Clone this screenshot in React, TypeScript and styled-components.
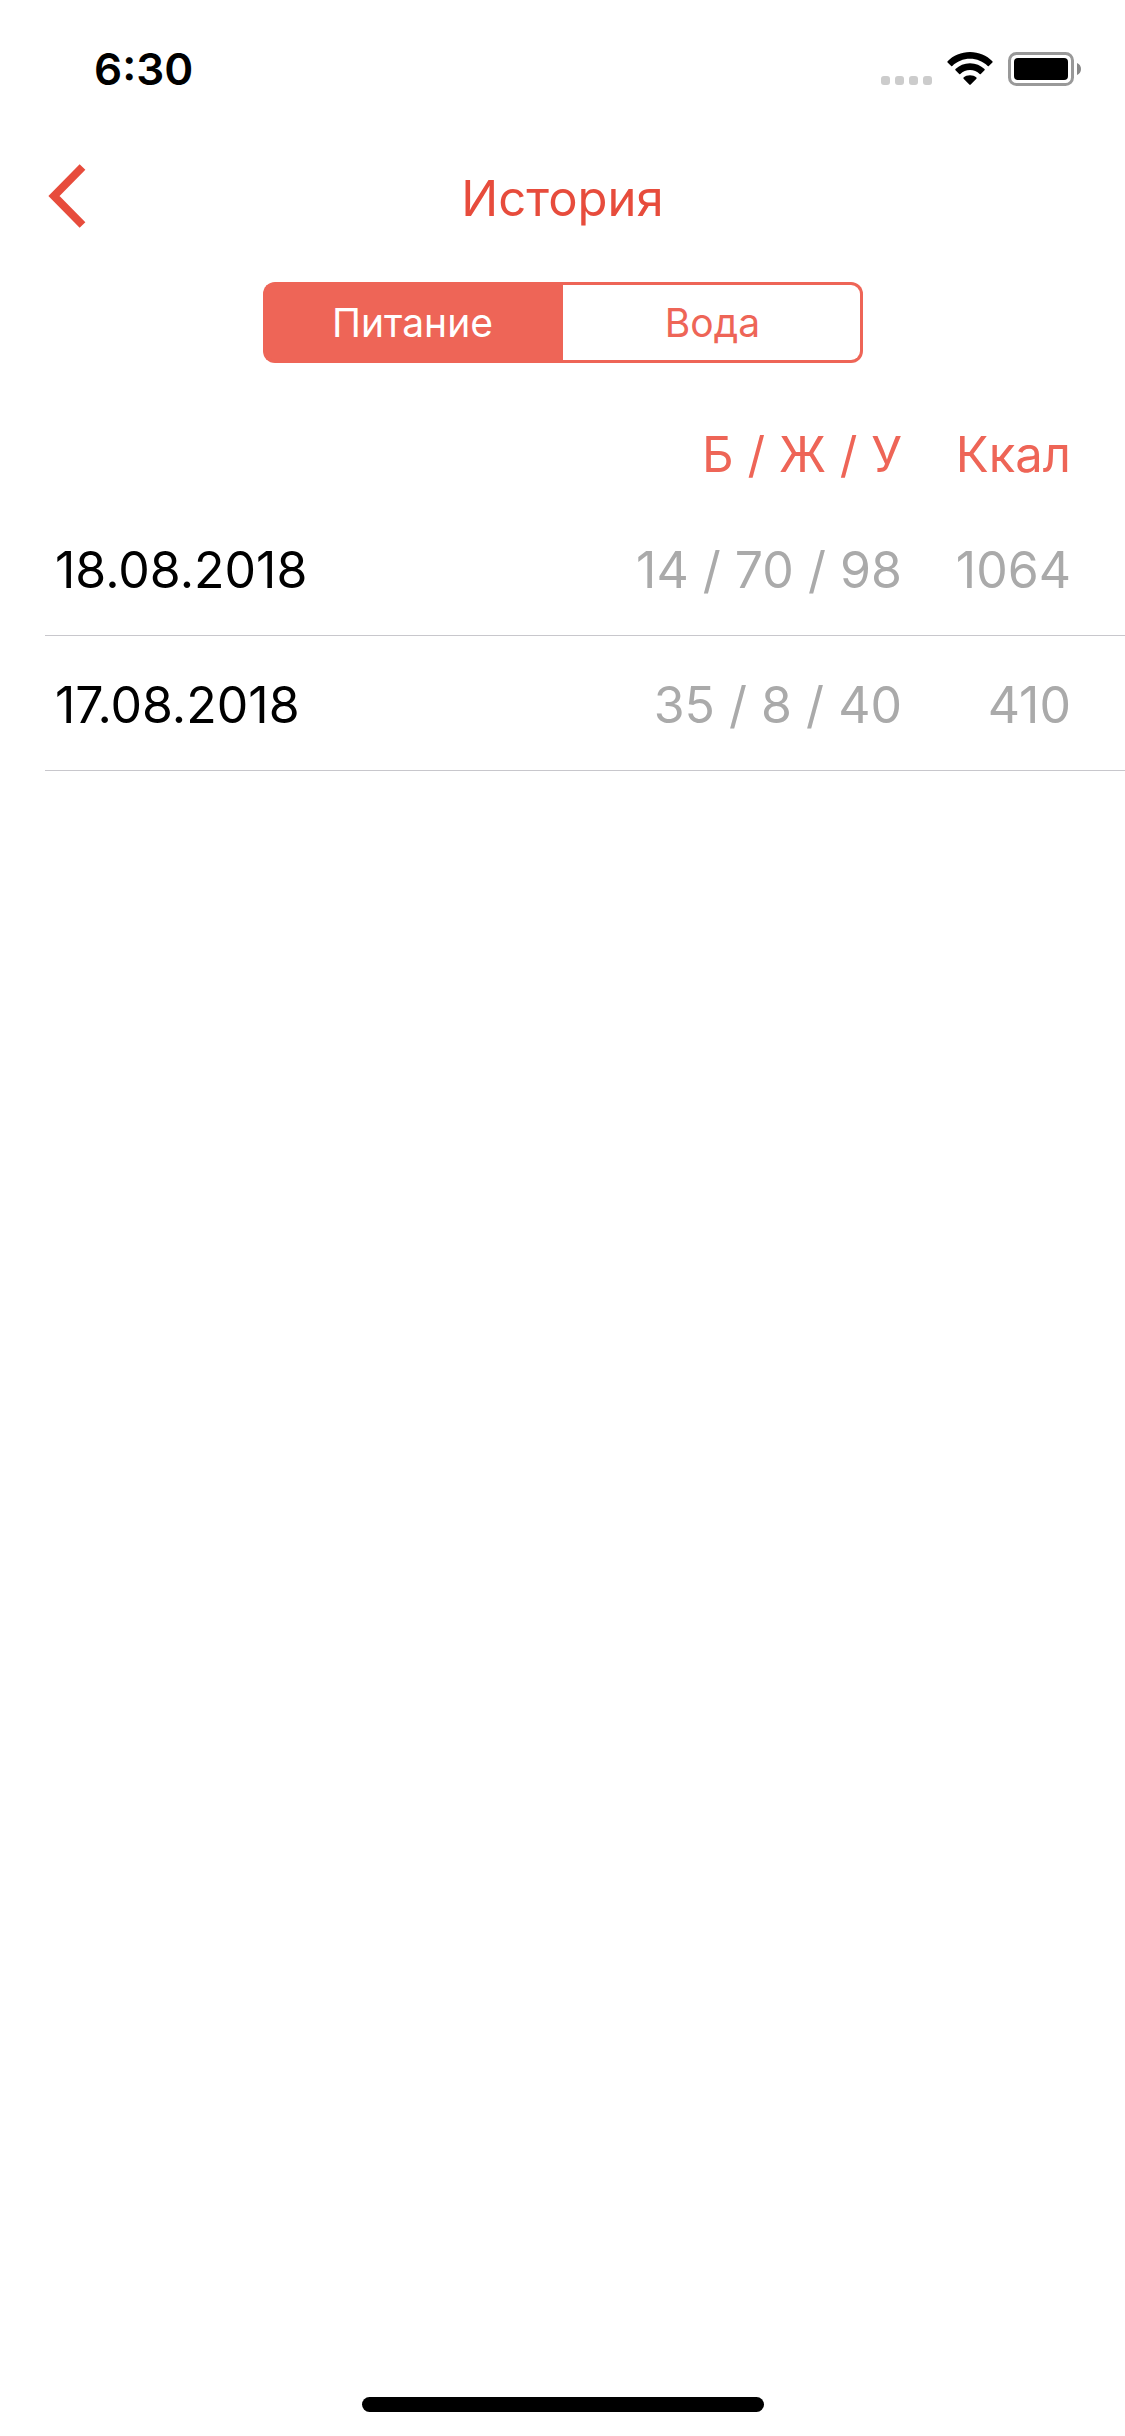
import { useState } from "react";
import styled, { createGlobalStyle } from "styled-components";

const GlobalStyle = createGlobalStyle`
  *, *::before, *::after { box-sizing: border-box; }
  body {
    margin: 0;
    background: #fff;
    color: #000;
    font-family: Inter, "Liberation Sans", sans-serif;
  }
`;

const Screen = styled.div`
  display: flex;
  flex-direction: column;
  min-height: 100vh;
`;

const StatusBar = styled.header`
  display: flex;
  align-items: center;
  justify-content: space-between;
  height: 138px;
  padding: 0 44px 0 94px;
`;

const Clock = styled.time`
  font-size: 44px;
  line-height: 60px;
  font-weight: 600;
`;

const StatusIcons = styled.div`
  display: flex;
  align-items: flex-end;
  gap: 15px;
`;

const NavBar = styled.nav`
  display: grid;
  grid-template-columns: 120px 1fr 120px;
  align-items: center;
  height: 120px;
  padding-top: 2px;
`;

const BackButton = styled.button`
  display: flex;
  padding: 0 0 6px 48px;
  border: 0;
  background: none;
  cursor: pointer;
`;

const Title = styled.h1`
  margin: 0;
  color: #e74c3c;
  font-size: 49px;
  line-height: 60px;
  font-weight: 400;
  text-align: center;
`;

const Segments = styled.div`
  display: grid;
  grid-template-columns: 1fr 1fr;
  width: min(600px, 100% - 90px);
  margin: 24px auto 45px;
`;

const Segment = styled.button<{ $active: boolean }>`
  height: 81px;
  padding: 0;
  border: 3px solid #ee6557;
  background: ${({ $active }) => ($active ? "#ee6557" : "#fff")};
  color: ${({ $active }) => ($active ? "#fff" : "#ee6557")};
  font-family: inherit;
  font-size: 39px;
  line-height: 48px;
  cursor: pointer;

  &:first-child {
    padding-right: 3px;
    border-right: 0;
    border-radius: 12px 0 0 12px;
  }

  &:last-child {
    padding-left: 3px;
    border-left: 0;
    border-radius: 0 12px 12px 0;
  }
`;

const History = styled.main`
  flex: 1;
  padding-left: 45px;
`;

const Table = styled.table`
  width: 100%;
  border-spacing: 0;
  font-size: 50px;
  line-height: 60px;
  white-space: nowrap;
`;

const HeadCell = styled.th`
  height: 93px;
  padding: 0;
  color: #ee6557;
  font-size: 49px;
  font-weight: 400;
  text-align: right;

  &:last-child {
    width: 223px;
    padding-right: 54px;
  }
`;

const Cell = styled.td`
  height: 135px;
  padding: 3px 0 0;
  border-bottom: 1px solid #c8c7cc;
  color: #aaa;
  text-align: right;

  &:last-child {
    padding-right: 54px;
  }
`;

const DateCell = styled.th`
  padding: 3px 0 0 10px;
  border-bottom: 1px solid #c8c7cc;
  font-weight: 400;
  text-align: left;
`;

const HomeBar = styled.footer`
  display: flex;
  justify-content: center;
  padding-bottom: 24px;
`;

const HomeIndicator = styled.div`
  width: 402px;
  height: 15px;
  border-radius: 8px;
  background: #000;
`;

const SignalIcon = () => (
  <svg width="51" height="34" viewBox="0 0 51 34" aria-hidden="true">
    {[0, 14, 28, 42].map((x) => (
      <rect key={x} x={x} y="24" width="9" height="9" rx="3" fill="#ccc" />
    ))}
  </svg>
);

const WifiIcon = () => (
  <svg width="46" height="34" viewBox="0 0 46 34" aria-hidden="true">
    <path d="M23 0C14.2 0 6.300 3.500 .6 9.200Q0 9.900 .6 10.500L4.200 14.100Q4.700 14.600 5.300 14C10 9.500 16.200 6.800 23 6.800S36 9.500 40.700 14Q41.300 14.600 41.800 14.100L45.400 10.500Q46 9.900 45.400 9.200C39.700 3.500 31.800 0 23 0Z" />
    <path d="M23 11.200C17.300 11.200 12.200 13.400 8.500 17Q7.900 17.600 8.500 18.200L12.200 21.900Q12.700 22.400 13.300 21.900C15.900 19.500 19.300 18 23 18S30.100 19.500 32.700 21.900Q33.300 22.400 33.800 21.900L37.500 18.200Q38.100 17.600 37.500 17C33.800 13.400 28.700 11.200 23 11.200Z" />
    <path d="M23 23.200C20.500 23.200 18.300 24 16.600 25.600Q16 26.200 16.600 26.800L22.300 32.600Q23 33.200 23.700 32.600L29.400 26.800Q30 26.200 29.400 25.600C27.700 24 25.500 23.200 23 23.200Z" />
  </svg>
);

const BatteryIcon = () => (
  <svg width="73" height="34" viewBox="0 0 73 34" aria-hidden="true">
    <rect x="1.500" y="1.500" width="63" height="31" rx="7" fill="none" stroke="#999" strokeWidth="3" />
    <rect x="6" y="6" width="54" height="22" rx="4" />
    <path d="M69 11C71.500 12 73 14.300 73 17S71.500 22 69 23Z" fill="#888" />
  </svg>
);

const BackIcon = () => (
  <svg width="38" height="64" viewBox="0 0 38 64" aria-hidden="true">
    <path d="M34.500 3L6 32L34.500 61" fill="none" stroke="#e74c3c" strokeWidth="8" />
  </svg>
);

const tabs = ["Питание", "Вода"];

const days = [
  { date: "18.08.2018", macros: "14 / 70 / 98", kcal: 1064 },
  { date: "17.08.2018", macros: "35 / 8 / 40", kcal: 410 },
];

export default function App() {
  const [active, setActive] = useState(tabs[0]);

  return (
    <Screen>
      <GlobalStyle />
      <StatusBar>
        <Clock>6:30</Clock>
        <StatusIcons>
          <SignalIcon />
          <WifiIcon />
          <BatteryIcon />
        </StatusIcons>
      </StatusBar>
      <NavBar>
        <BackButton type="button" aria-label="Назад">
          <BackIcon />
        </BackButton>
        <Title>История</Title>
      </NavBar>
      <Segments role="group" aria-label="История">
        {tabs.map((tab) => (
          <Segment
            key={tab}
            type="button"
            $active={tab === active}
            aria-pressed={tab === active}
            onClick={() => setActive(tab)}
          >
            {tab}
          </Segment>
        ))}
      </Segments>
      <History>
        <Table>
          <thead>
            <tr>
              <HeadCell as="td" />
              <HeadCell scope="col">Б / Ж / У</HeadCell>
              <HeadCell scope="col">Ккал</HeadCell>
            </tr>
          </thead>
          <tbody>
            {days.map(({ date, macros, kcal }) => (
              <tr key={date}>
                <DateCell scope="row">{date}</DateCell>
                <Cell>{macros}</Cell>
                <Cell>{kcal}</Cell>
              </tr>
            ))}
          </tbody>
        </Table>
      </History>
      <HomeBar>
        <HomeIndicator />
      </HomeBar>
    </Screen>
  );
}
